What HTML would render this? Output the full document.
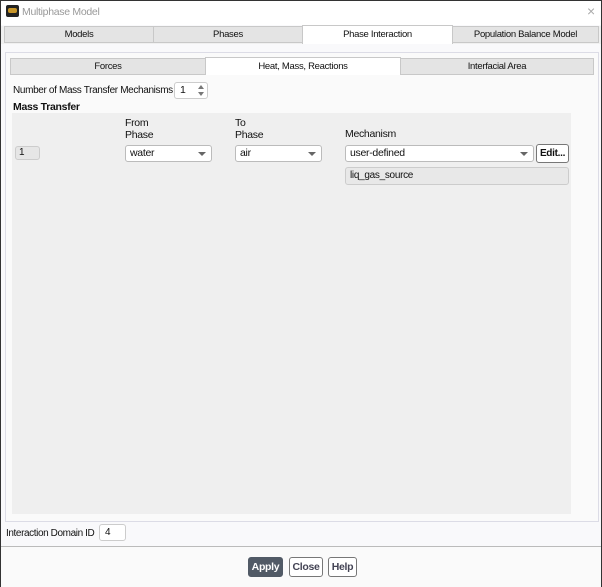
<!DOCTYPE html>
<html><head><style>
*{box-sizing:border-box;margin:0;padding:0}
body{width:602px;height:587px;background:#fff;font-family:"Liberation Sans",sans-serif;font-size:10.5px;letter-spacing:-0.3px;color:#111;position:relative;overflow:hidden}
.win{position:absolute;left:0;top:0;width:602px;height:587px;border:1px solid #333;background:#f9f9fb}
.abs{position:absolute;white-space:nowrap}
.title{left:0;top:0;width:600px;height:24px;background:#fff}
.tab{position:absolute;height:17px;background:#e4e4e4;border:1px solid #c8c8c8;text-align:center;line-height:15px;font-size:9.5px}
.tab.act{background:#fff;border-bottom:none}
.combo{position:absolute;height:17px;background:#fff;border:1px solid #bbb;border-radius:3px;line-height:15px;padding-left:4px;font-size:10.5px}
.arr{position:absolute;right:5px;top:6px;width:0;height:0;border-left:4px solid transparent;border-right:4px solid transparent;border-top:4px solid #666}
.btn{position:absolute;top:556px;height:20px;border:1px solid #777;border-radius:3px;background:#fff;font-weight:bold;line-height:18px;text-align:center;font-size:10.5px;color:#445}
</style></head><body>
<div class="win">
<div class="abs title"></div>
<div class="abs" style="left:5px;top:4px;width:13px;height:12px;background:#222;border-radius:2px"><div style="margin:3px 2px;width:9px;height:5px;background:#c8962a;border-radius:2px"></div></div>
<div class="abs" style="left:21px;top:5px;color:#999;font-size:10.5px">Multiphase Model</div>
<div class="abs" style="left:586px;top:2px;color:#aaa;font-size:14px">×</div>

<div class="abs" style="left:0;top:25px;width:600px;height:18px;background:#f0f0f0"></div>
<div class="tab" style="left:3px;top:25px;width:150px">Models</div>
<div class="tab" style="left:152px;top:25px;width:150px">Phases</div>
<div class="tab act" style="left:301px;top:24px;width:151px;height:19px;line-height:17px">Phase Interaction</div>
<div class="tab" style="left:451px;top:25px;width:147px">Population Balance Model</div>

<div class="abs" style="left:4px;top:51px;width:594px;height:470px;border:1px solid #dcdce6;background:#fafafa"></div>
<div class="tab" style="left:9px;top:57px;width:196px">Forces</div>
<div class="tab act" style="left:204px;top:56px;width:196px;height:18px;line-height:17px">Heat, Mass, Reactions</div>
<div class="tab" style="left:399px;top:57px;width:194px">Interfacial Area</div>

<div class="abs" style="left:12px;top:84px;font-size:10px;letter-spacing:-0.35px">Number of Mass Transfer Mechanisms</div>
<div class="abs" style="left:173px;top:81px;width:34px;height:17px;background:#fff;border:1px solid #ccc;border-radius:3px;padding-left:5px;line-height:15px">1
<div class="abs" style="right:3px;top:2px;border-left:3px solid transparent;border-right:3px solid transparent;border-bottom:4px solid #777"></div>
<div class="abs" style="right:3px;top:9px;border-left:3px solid transparent;border-right:3px solid transparent;border-top:4px solid #777"></div></div>
<div class="abs" style="left:12px;top:100px;font-weight:bold">Mass Transfer</div>

<div class="abs" style="left:11px;top:112px;width:559px;height:401px;background:#efefef"></div>
<div class="abs" style="left:124px;top:116px;line-height:12px">From<br>Phase</div>
<div class="abs" style="left:234px;top:116px;line-height:12px">To<br>Phase</div>
<div class="abs" style="left:344px;top:127px">Mechanism</div>
<div class="abs" style="left:14px;top:145px;width:25px;height:14px;background:#e6e6e6;border:1px solid #ccc;border-radius:3px;padding-left:3px;line-height:12px;font-size:10px">1</div>
<div class="combo" style="left:124px;top:144px;width:87px">water<div class="arr"></div></div>
<div class="combo" style="left:234px;top:144px;width:87px">air<div class="arr"></div></div>
<div class="combo" style="left:344px;top:144px;width:189px">user-defined<div class="arr"></div></div>
<div class="abs" style="left:535px;top:143px;width:33px;height:19px;background:#fff;border:1px solid #777;border-radius:3px;font-weight:bold;line-height:17px;text-align:center;font-size:10px">Edit...</div>
<div class="abs" style="left:344px;top:166px;width:224px;height:18px;background:#e8e8e8;border:1px solid #ccc;border-radius:3px;line-height:16px;padding-left:4px;font-size:10px">liq_gas_source</div>

<div class="abs" style="left:5px;top:527px;font-size:10px;letter-spacing:-0.4px">Interaction Domain ID</div>
<div class="abs" style="left:98px;top:523px;width:27px;height:17px;background:#fff;border:1px solid #ccc;border-radius:3px;padding-left:5px;line-height:15px;font-size:10px">4</div>
<div class="abs" style="left:0;top:545px;width:600px;height:1px;background:#bbb"></div>
<div class="abs" style="left:0;top:546px;width:600px;height:40px;background:#fafafa"></div>
<div class="btn" style="left:247px;width:35px;background:#515a66;color:#fff;border-color:#515a66">Apply</div>
<div class="btn" style="left:288px;width:34px">Close</div>
<div class="btn" style="left:327px;width:29px">Help</div>
</div>
</body></html>
